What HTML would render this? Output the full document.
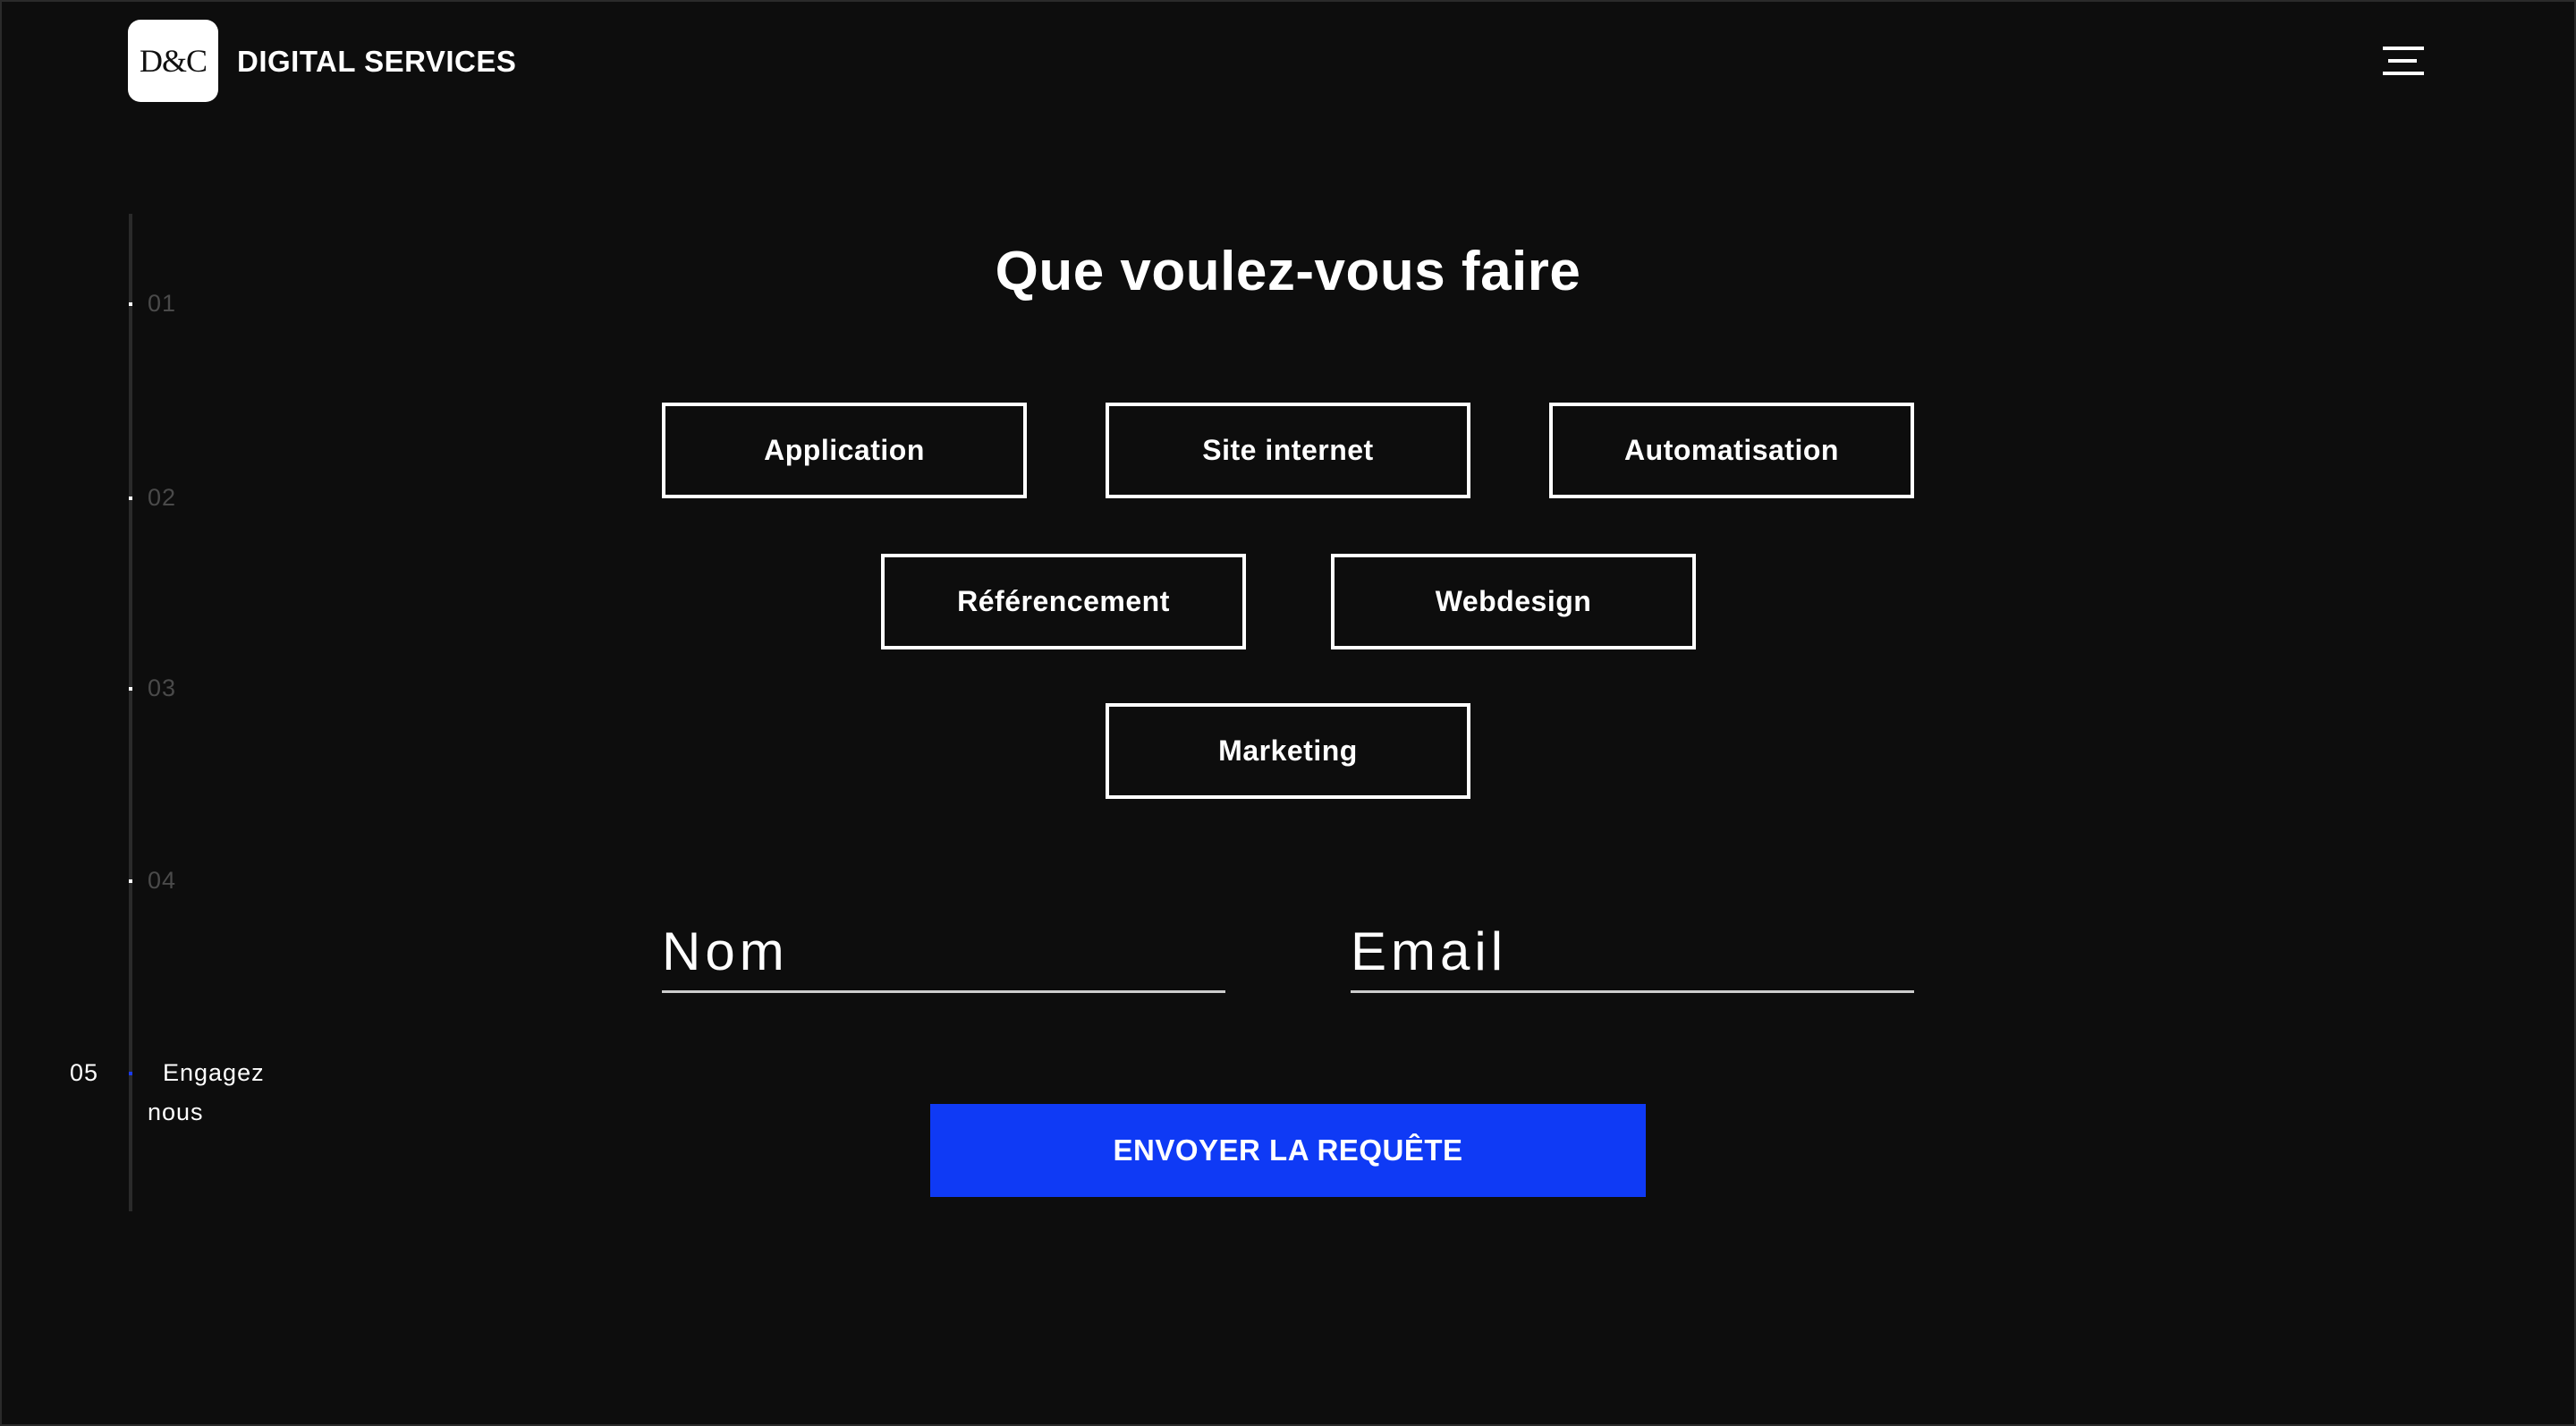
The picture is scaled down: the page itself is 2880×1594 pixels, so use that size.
<!DOCTYPE html>
<html><head><meta charset="utf-8"><style>
*{margin:0;padding:0;box-sizing:border-box}
body{width:2880px;height:1594px;background:#0d0d0d;font-family:"Liberation Sans",sans-serif;color:#fff;position:relative;overflow:hidden;box-shadow:inset 0 0 0 2px #2a2a2a}
.a{position:absolute}
.logo{left:143px;top:22px;width:101px;height:92px;background:#fff;border-radius:14px;color:#111;font-family:"Liberation Serif",serif;font-size:36px;display:flex;align-items:center;justify-content:center;letter-spacing:-1px}
.brand{left:265px;top:50px;font-size:33px;font-weight:bold;letter-spacing:0.5px}
.hb{background:#fff;height:4px}
.line{left:144px;top:239px;width:4px;height:1115px;background:#2a2a2a}
.dot{left:144px;width:4px;height:4px;background:#fff}
.num{left:165px;font-size:27px;color:#4a4a4a;letter-spacing:1px}
h1{position:absolute;left:0;width:2880px;text-align:center;top:268px;font-size:62px;font-weight:bold;letter-spacing:0.5px}
.btn{position:absolute;width:408px;height:107px;border:4px solid #fff;display:flex;align-items:center;justify-content:center;font-size:32px;font-weight:bold;letter-spacing:0.5px}
.inl{position:absolute;font-size:60px;letter-spacing:5px}
.send{left:1040px;top:1234px;width:800px;height:104px;background:#0f3af5;display:flex;align-items:center;justify-content:center;font-size:33px;font-weight:bold;letter-spacing:0.5px}
</style></head><body>
<div class="a logo">D&amp;C</div>
<div class="a brand">DIGITAL SERVICES</div>
<div class="a hb" style="left:2664px;top:52px;width:46px"></div>
<div class="a hb" style="left:2670px;top:66px;width:32px"></div>
<div class="a hb" style="left:2664px;top:80px;width:46px"></div>

<div class="a line"></div>
<div class="a dot" style="top:338px"></div>
<div class="a dot" style="top:555px"></div>
<div class="a dot" style="top:768px"></div>
<div class="a dot" style="top:983px"></div>
<div class="a dot" style="top:1198px;background:#1a3af5"></div>
<div class="a num" style="top:324px">01</div>
<div class="a num" style="top:541px">02</div>
<div class="a num" style="top:754px">03</div>
<div class="a num" style="top:969px">04</div>
<div class="a num" style="left:78px;top:1184px;color:#fff">05</div>
<div class="a num" style="left:182px;top:1184px;color:#fff">Engagez</div>
<div class="a num" style="left:165px;top:1228px;color:#fff">nous</div>

<h1>Que voulez-vous faire</h1>
<div class="btn" style="left:740px;top:450px">Application</div>
<div class="btn" style="left:1236px;top:450px">Site internet</div>
<div class="btn" style="left:1732px;top:450px">Automatisation</div>
<div class="btn" style="left:985px;top:619px">Référencement</div>
<div class="btn" style="left:1488px;top:619px">Webdesign</div>
<div class="btn" style="left:1236px;top:786px">Marketing</div>

<div class="a" style="left:740px;top:1107px;width:630px;height:3px;background:#ccc"></div>
<div class="a" style="left:1510px;top:1107px;width:630px;height:3px;background:#ccc"></div>
<div class="inl" style="left:740px;top:1029px">Nom</div>
<div class="inl" style="left:1510px;top:1029px">Email</div>

<div class="a send">ENVOYER LA REQUÊTE</div>
</body></html>
